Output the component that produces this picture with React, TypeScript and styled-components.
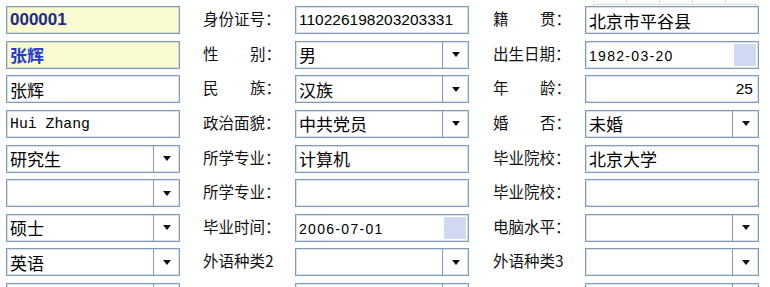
import styled, { createGlobalStyle } from "styled-components";

const GlobalStyle = createGlobalStyle`
  html, body {
    margin: 0;
    padding: 0;
    background: #ffffff;
  }
  body {
    font-family: "Noto Sans CJK SC", "Liberation Sans", sans-serif;
    color: #000;
  }
`;

const Page = styled.div`
  width: 770px;
  height: 287px;
  overflow: hidden;
  padding-left: 6px;
  box-sizing: border-box;
`;

// faint grid of a table that sits above the form
const TopStrip = styled.div`
  display: flex;
  height: 6px;
  margin-left: 587px;
`;

const StripCell = styled.div`
  width: 33px;
  height: 5px;
  border-left: 1px solid #dcdcdc;
  border-bottom: 1px solid #dcdcdc;
  box-sizing: border-box;
`;

const Form = styled.div`
  display: grid;
  grid-template-columns: 174px 115px 174px 116px 174px;
  grid-auto-rows: 28px;
  row-gap: 6.625px;
`;

const LabelCell = styled.div<{ $pad: number }>`
  display: flex;
  align-items: center;
  padding-left: ${(p) => p.$pad}px;
  padding-bottom: 4px;
  box-sizing: border-box;
  font-size: 15.5px;
  color: #111;
  white-space: nowrap;
`;

const LabelText = styled.div`
  display: flex;
  justify-content: space-between;
  width: 78px;
`;

const Field = styled.div<{ $bg?: string }>`
  display: flex;
  align-items: stretch;
  height: 28px;
  box-sizing: border-box;
  border: 1px solid #7f9db9;
  box-shadow: inset 0 0 0 1px rgba(127, 157, 185, 0.3);
  background: ${(p) => p.$bg ?? "#ffffff"};
  overflow: hidden;
`;

type Kind = "cjk" | "digits" | "date" | "id" | "name" | "mono";

const Value = styled.div<{ $kind: Kind; $right?: boolean }>`
  flex: 1;
  display: flex;
  align-items: center;
  justify-content: ${(p) => (p.$right ? "flex-end" : "flex-start")};
  padding: 0 ${(p) => (p.$right ? "5px" : "0")} 0 3px;
  white-space: nowrap;
  color: #000;
  ${(p) =>
    p.$kind === "cjk" &&
    `font-size: 17px; font-family: "Noto Sans CJK SC", sans-serif;`}
  ${(p) =>
    p.$kind === "digits" &&
    `font-size: 15.5px; font-family: "Liberation Sans", sans-serif;`}
  ${(p) =>
    p.$kind === "date" &&
    `font-size: 14px; letter-spacing: 1.3px; font-family: "Liberation Sans", sans-serif; padding-top: 2px;`}
  ${(p) =>
    p.$kind === "id" &&
    `font-size: 17px; font-weight: bold; color: #1b2a86; font-family: "Liberation Sans", sans-serif;`}
  ${(p) =>
    p.$kind === "name" &&
    `font-size: 17px; font-weight: bold; color: #1f3bd2; font-family: "Noto Sans CJK SC", sans-serif;`}
  ${(p) =>
    p.$kind === "mono" &&
    `font-size: 14.8px; font-family: "Liberation Mono", monospace;`}
`;

const ArrowBox = styled.div`
  width: 25px;
  border-left: 1px solid #7f9db9;
  display: flex;
  align-items: center;
  justify-content: center;
`;

const Arrow = styled.span`
  width: 0;
  height: 0;
  border-left: 4px solid transparent;
  border-right: 4px solid transparent;
  border-top: 5px solid #111;
`;

const DateButton = styled.div`
  width: 22px;
  margin: 2px 2px 2px 0;
  background: #cfd9f1;
`;

type Cell =
  | { t: "label"; text: string; pad?: number }
  | { t: "text"; value: string; kind: Kind; bg?: string; right?: boolean }
  | { t: "select"; value: string }
  | { t: "date"; value: string };

const Label = ({ text, pad }: { text: string; pad: number }) => {
  const short = text.length === 3 && text.endsWith("：");
  return (
    <LabelCell $pad={pad}>
      {short ? (
        <LabelText>
          <span>{text[0]}</span>
          <span>{text.slice(1)}</span>
        </LabelText>
      ) : (
        <span>{text}</span>
      )}
    </LabelCell>
  );
};

const rows: Cell[][] = [
  [
    { t: "text", value: "000001", kind: "id", bg: "#fafad0" },
    { t: "label", text: "身份证号：" },
    { t: "text", value: "110226198203203331", kind: "digits" },
    { t: "label", text: "籍贯：" },
    { t: "text", value: "北京市平谷县", kind: "cjk" },
  ],
  [
    { t: "text", value: "张辉", kind: "name", bg: "#fafad0" },
    { t: "label", text: "性别：" },
    { t: "select", value: "男" },
    { t: "label", text: "出生日期：" },
    { t: "date", value: "1982-03-20" },
  ],
  [
    { t: "text", value: "张辉", kind: "cjk" },
    { t: "label", text: "民族：" },
    { t: "select", value: "汉族" },
    { t: "label", text: "年龄：" },
    { t: "text", value: "25", kind: "digits", right: true },
  ],
  [
    { t: "text", value: "Hui Zhang", kind: "mono" },
    { t: "label", text: "政治面貌：" },
    { t: "select", value: "中共党员" },
    { t: "label", text: "婚否：" },
    { t: "select", value: "未婚" },
  ],
  [
    { t: "select", value: "研究生" },
    { t: "label", text: "所学专业：" },
    { t: "text", value: "计算机", kind: "cjk" },
    { t: "label", text: "毕业院校：" },
    { t: "text", value: "北京大学", kind: "cjk" },
  ],
  [
    { t: "select", value: "" },
    { t: "label", text: "所学专业：" },
    { t: "text", value: "", kind: "cjk" },
    { t: "label", text: "毕业院校：" },
    { t: "text", value: "", kind: "cjk" },
  ],
  [
    { t: "select", value: "硕士" },
    { t: "label", text: "毕业时间：" },
    { t: "date", value: "2006-07-01" },
    { t: "label", text: "电脑水平：" },
    { t: "select", value: "" },
  ],
  [
    { t: "select", value: "英语" },
    { t: "label", text: "外语种类2" },
    { t: "select", value: "" },
    { t: "label", text: "外语种类3" },
    { t: "select", value: "" },
  ],
  [
    { t: "select", value: "" },
    { t: "label", text: "外语水平：" },
    { t: "select", value: "" },
    { t: "label", text: "外语水平：" },
    { t: "select", value: "" },
  ],
];

const renderCell = (c: Cell, col: number, key: string) => {
  switch (c.t) {
    case "label":
      return <Label key={key} text={c.text} pad={col === 1 ? 23 : 24} />;
    case "text":
      return (
        <Field key={key} $bg={c.bg}>
          <Value $kind={c.kind} $right={c.right}>
            {c.value}
          </Value>
        </Field>
      );
    case "select":
      return (
        <Field key={key}>
          <Value $kind="cjk">{c.value}</Value>
          <ArrowBox>
            <Arrow />
          </ArrowBox>
        </Field>
      );
    case "date":
      return (
        <Field key={key}>
          <Value $kind="date">{c.value}</Value>
          <DateButton />
        </Field>
      );
  }
};

export default function App() {
  return (
    <Page>
      <GlobalStyle />
      <TopStrip>
        {[0, 1, 2, 3, 4].map((i) => (
          <StripCell key={i} />
        ))}
      </TopStrip>
      <Form>
        {rows.map((row, r) => row.map((c, col) => renderCell(c, col, `${r}-${col}`)))}
      </Form>
    </Page>
  );
}
